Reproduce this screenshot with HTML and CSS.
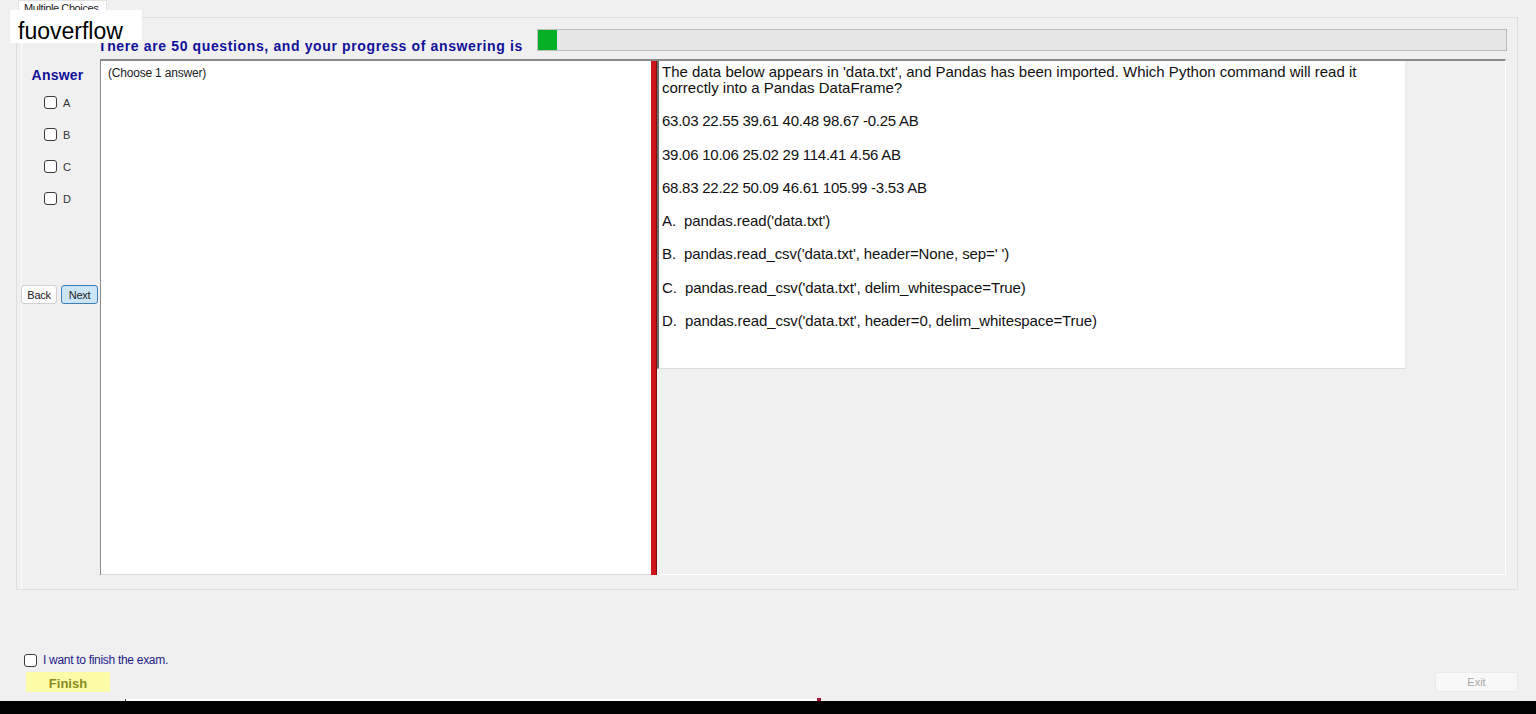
FILE: index.html
```html
<!doctype html>
<html lang="en">
  <head>
    <meta charset="UTF-8" />
    <meta name="viewport" content="width=device-width, initial-scale=1.0" />
    <title>Exam - Multiple Choices</title>
    <link rel="stylesheet" href="styles.css">
  </head>
  <body>
    <div class="window">
      <div class="tab-strip">
        <div class="tab">Multiple Choices</div>
      </div>

      <div class="tab-page">
        <div class="header-row">
          <h1 class="progress-title">There are 50 questions, and your progress of answering is</h1>
          <div class="progress-bar">
            <div class="progress-fill"></div>
          </div>
        </div>

        <div class="main-row">
          <div class="answer-col">
            <div class="answer-label">Answer</div>
            <label class="choice"><input type="checkbox" /> A</label>
            <label class="choice"><input type="checkbox" /> B</label>
            <label class="choice"><input type="checkbox" /> C</label>
            <label class="choice"><input type="checkbox" /> D</label>
            <div class="nav-buttons">
              <button class="btn">Back</button>
              <button class="btn btn-active">Next</button>
            </div>
          </div>

          <div class="split">
            <div class="pane-left">(Choose 1 answer)</div>
            <div class="splitter"></div>
            <div class="pane-right">
              <div class="question-box">
                <p>The data below appears in 'data.txt', and Pandas has been imported. Which Python command will read it correctly into a Pandas DataFrame?</p>
                <p class="data">63.03 22.55 39.61 40.48 98.67 -0.25 AB</p>
                <p class="data">39.06 10.06 25.02 29 114.41 4.56 AB</p>
                <p class="data">68.83 22.22 50.09 46.61 105.99 -3.53 AB</p>
                <p class="opt">A.&nbsp; pandas.read('data.txt')</p>
                <p class="opt">B.&nbsp; pandas.read_csv('data.txt', header=None, sep=' ')</p>
                <p class="opt">C.&nbsp; pandas.read_csv('data.txt', delim_whitespace=True)</p>
                <p class="opt">D.&nbsp; pandas.read_csv('data.txt', header=0, delim_whitespace=True)</p>
              </div>
            </div>
          </div>
        </div>
      </div>

      <div class="footer">
        <label class="finish-check"><input type="checkbox" /> I want to finish the exam.</label>
        <div class="footer-buttons">
          <button class="btn-finish">Finish</button>
          <button class="btn-exit">Exit</button>
        </div>
      </div>

      <div class="taskbar">
        <div class="taskbar-line"><span class="taskbar-mark"></span></div>
      </div>

      <div class="watermark">fuoverflow</div>
    </div>
  </body>
</html>
```

FILE: styles.css
```css
* {
  margin: 0;
  padding: 0;
  box-sizing: border-box;
}

body {
  font-family: 'Liberation Sans', Arial, sans-serif;
  background-color: #f0f0f0;
  color: #000;
  overflow: hidden;
}

.window {
  position: relative;
  width: 1536px;
  height: 714px;
  display: flex;
  flex-direction: column;
}

/* tab header */
.tab-strip {
  height: 17px;
  padding-left: 18px;
  display: flex;
}

.tab {
  background: #fff;
  border: 1px solid #e2e2e2;
  border-bottom: none;
  font-size: 11px;
  letter-spacing: -0.4px;
  color: #222;
  padding: 1px 6px 0 5px;
  height: 17px;
  width: 89px;
  white-space: nowrap;
}

.tab-page {
  margin-left: 16px;
  width: 1502px;
  height: 573px;
  border: 1px solid #dedede;
  box-shadow: inset 4px 0 0 #f0f0f0, inset 5px 0 0 #fafafa;
  padding-top: 11px;
}

/* header */
.header-row {
  display: flex;
  align-items: flex-end;
  height: 22px;
}

.progress-title {
  margin-left: 81px;
  width: 439px;
  font-size: 14px;
  letter-spacing: 0.63px;
  font-weight: bold;
  color: #10109a;
  white-space: nowrap;
  line-height: 16px;
  margin-bottom: -3px;
}

.progress-bar {
  width: 970px;
  height: 22px;
  background: #e6e6e6;
  border: 1px solid #bcbcbc;
}

.progress-fill {
  width: 19px;
  height: 100%;
  background: #06b025;
}

/* main */
.main-row {
  display: flex;
  margin-top: 8px;
}

.answer-col {
  width: 83px;
  display: flex;
  flex-direction: column;
}

.answer-label {
  margin-top: 8px;
  margin-right: 2px;
  text-align: center;
  font-size: 14px;
  letter-spacing: 0.2px;
  font-weight: bold;
  color: #10109a;
  height: 16px;
}

.choice {
  display: flex;
  align-items: center;
  gap: 6px;
  margin-left: 27px;
  margin-top: 10px;
  height: 19px;
  font-size: 11px;
  color: #333;
}

.choice + .choice {
  margin-top: 13px;
}

input[type='checkbox'] {
  appearance: none;
  width: 13px;
  height: 13px;
  border: 1px solid #3c3c3c;
  border-radius: 3px;
  background: #fff;
  margin: 0;
}

.nav-buttons {
  display: flex;
  gap: 4px;
  margin-top: 77px;
  margin-left: 4px;
}

.btn {
  font-family: 'Liberation Sans', Arial, sans-serif;
  font-size: 11px;
  letter-spacing: -0.3px;
  width: 36px;
  height: 19px;
  background: #fdfdfd;
  border: 1px solid #d0d0d0;
  border-radius: 3px;
  color: #222;
}

.btn-active {
  width: 37px;
  background: #cce4f7;
  border-color: #3f7fb8;
}

.split {
  width: 1406px;
  height: 516px;
  display: flex;
  border-top: 2px solid #8a8a8a;
  border-left: 1px solid #8a8a8a;
  border-right: 1px solid #fff;
}

.pane-left {
  width: 550px;
  background: #fff;
  font-size: 12px;
  letter-spacing: -0.2px;
  color: #222;
  padding: 5px 7px;
  border-bottom: 1px solid #dcdcdc;
}

.splitter {
  width: 6px;
  background: #cc141a;
  border-right: 1px solid #7a1010;
}

.pane-right {
  flex: 1;
  background: #f0f0f0;
  border-bottom: 1px solid #fff;
}

.question-box {
  width: 749px;
  height: 308px;
  background: #fff;
  border-left: 2px solid #6d6d6d;
  border-bottom: 1px solid #dcdcdc;
  border-right: 1px solid #eaeaea;
  padding: 3px 3px;
  font-size: 15px;
  line-height: 16px;
  color: #111;
}

.question-box p {
  margin-bottom: 17.3px;
}

.question-box p.data {
  letter-spacing: -0.25px;
}

.question-box p.opt {
  letter-spacing: -0.1px;
}

/* footer */
.footer {
  flex: 1;
  display: flex;
  flex-direction: column;
  padding-top: 63px;
}

.finish-check {
  display: flex;
  align-items: center;
  gap: 6px;
  margin-left: 24px;
  font-size: 12px;
  letter-spacing: -0.3px;
  color: #1c1c8c;
  height: 14px;
}

.footer-buttons {
  display: flex;
  justify-content: space-between;
  margin-top: 5px;
  padding: 0 18px 0 26px;
}

.btn-finish {
  width: 84px;
  height: 20px;
  border: none;
  background: #fbfba8;
  color: #8a8a1e;
  font-family: 'Liberation Sans', Arial, sans-serif;
  font-size: 13px;
  font-weight: bold;
  padding-top: 2px;
}

.btn-exit {
  width: 83px;
  height: 20px;
  border: 1px solid #e8e8e8;
  border-radius: 3px;
  background: #f8f8f8;
  color: #a8a8a8;
  font-family: 'Liberation Sans', Arial, sans-serif;
  font-size: 11px;
}

.taskbar {
  height: 15px;
  display: flex;
  flex-direction: column;
}

.taskbar-line {
  margin-left: 125px;
  width: 696px;
  height: 2px;
  background: #fff;
  border-left: 1px solid #444;
  position: relative;
}

.taskbar-mark {
  position: absolute;
  right: 0;
  top: -1px;
  width: 4px;
  height: 3px;
  background: #a01030;
}

.taskbar::after {
  content: '';
  flex: 1;
  background: #000;
}

/* overlay watermark */
.watermark {
  position: absolute;
  left: 10px;
  top: 10px;
  width: 132px;
  height: 33px;
  background: #fff;
  font-family: 'Liberation Sans', Arial, sans-serif;
  font-size: 23px;
  line-height: 27px;
  color: #000;
  padding: 8px 0 0 8px;
}
```
